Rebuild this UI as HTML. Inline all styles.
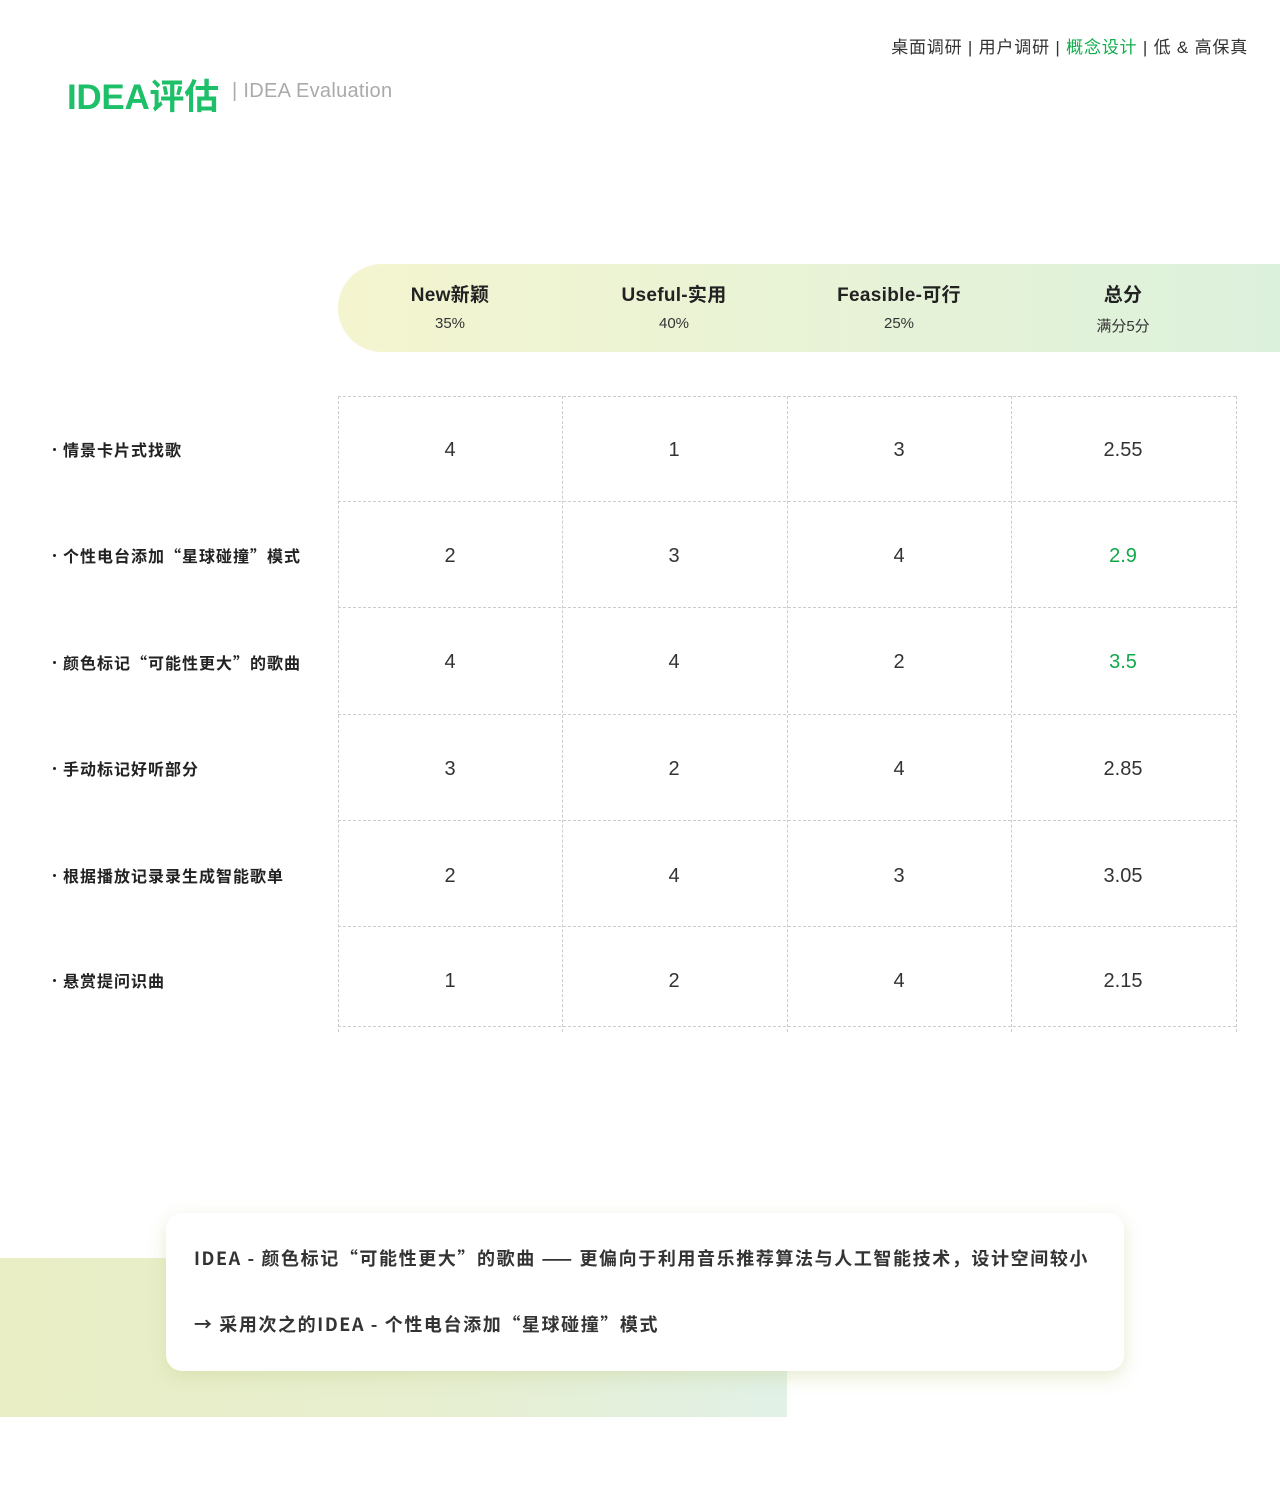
<!DOCTYPE html>
<html><head><meta charset="utf-8"><style>
*{margin:0;padding:0;box-sizing:border-box}
body{width:1280px;height:1492px;background:#fff;position:relative;overflow:hidden;font-family:"Liberation Sans","Noto Sans CJK SC",sans-serif;color:#222}
.abs{position:absolute}
.nav{right:32px;top:33px;font-size:17px;color:#333;white-space:nowrap;letter-spacing:0.8px}
.nav .g{color:#0fae4b}
.title{left:67px;top:69px;font-size:35px;font-weight:bold;color:#1dbf68;letter-spacing:-0.3px}
.sub{left:232px;top:80px;font-size:20px;color:#aaa;letter-spacing:0.3px}
.pill{left:338px;top:264px;width:942px;height:88px;border-radius:44px 0 0 44px;background:linear-gradient(90deg,#f4f5cf 0%,#ebf3d5 40%,#dcf1dc 100%)}
.hc{position:absolute;width:224px;text-align:center}
.hc b{display:block;font-size:19px;font-weight:bold;color:#222;margin-top:16px;letter-spacing:0.3px}
.hc span{display:block;font-size:15px;color:#333;margin-top:8px}
.vl{position:absolute;top:396px;height:636px;border-left:1px dashed #ccc;width:0}
.hl{position:absolute;left:338px;width:898px;border-top:1px dashed #ccc;height:0}
.lab{position:absolute;left:63px;font-size:16px;font-weight:bold;color:#222;letter-spacing:1px;font-family:"Noto Sans CJK SC",sans-serif;white-space:nowrap;line-height:24px}
.lab:before{content:"";position:absolute;left:-10px;top:11px;width:3px;height:3px;border-radius:50%;background:#222}
.num{position:absolute;width:224px;text-align:center;font-size:20px;color:#333}
.gr{color:#12a84a}
.band{left:0;top:1258px;width:787px;height:159px;background:linear-gradient(90deg,#e9eec4 0%,#e7efd2 60%,#e1f1e7 100%)}
.card{left:166px;top:1213px;width:958px;height:158px;background:#fff;border-radius:16px;box-shadow:0 6px 18px rgba(200,210,150,0.45)}
.ct{position:absolute;left:28px;font-size:18px;font-weight:bold;color:#333;white-space:nowrap;letter-spacing:1.6px;font-family:"Noto Sans CJK SC",sans-serif}
</style></head><body>
<div class="abs nav">桌面调研 | 用户调研 | <span class="g">概念设计</span> | 低 &amp; 高保真</div>
<div class="abs title">IDEA评估</div>
<div class="abs sub">| IDEA Evaluation</div>
<div class="abs pill"></div>
<div class="hc" style="left:338px;top:264px"><b>New新颖</b><span>35%</span></div>
<div class="hc" style="left:562px;top:264px"><b>Useful-实用</b><span>40%</span></div>
<div class="hc" style="left:787px;top:264px"><b>Feasible-可行</b><span>25%</span></div>
<div class="hc" style="left:1011px;top:264px"><b>总分</b><span>满分5分</span></div>

<div class="vl" style="left:338px"></div><div class="vl" style="left:562px"></div><div class="vl" style="left:787px"></div><div class="vl" style="left:1011px"></div><div class="vl" style="left:1236px"></div>
<div class="hl" style="top:396px"></div><div class="hl" style="top:501px"></div><div class="hl" style="top:607px"></div><div class="hl" style="top:714px"></div><div class="hl" style="top:820px"></div><div class="hl" style="top:926px"></div><div class="hl" style="top:1026px"></div>

<div class="lab" style="top:437px">情景卡片式找歌</div>
<div class="lab" style="top:543px">个性电台添加“星球碰撞”模式</div>
<div class="lab" style="top:650px">颜色标记“可能性更大”的歌曲</div>
<div class="lab" style="top:756px">手动标记好听部分</div>
<div class="lab" style="top:863px">根据播放记录录生成智能歌单</div>
<div class="lab" style="top:968px">悬赏提问识曲</div>

<div class="num" style="left:338px;top:439px">4</div><div class="num" style="left:562px;top:439px">1</div><div class="num" style="left:787px;top:439px">3</div><div class="num" style="left:1011px;top:439px">2.55</div>
<div class="num" style="left:338px;top:545px">2</div><div class="num" style="left:562px;top:545px">3</div><div class="num" style="left:787px;top:545px">4</div><div class="num gr" style="left:1011px;top:545px">2.9</div>
<div class="num" style="left:338px;top:651px">4</div><div class="num" style="left:562px;top:651px">4</div><div class="num" style="left:787px;top:651px">2</div><div class="num gr" style="left:1011px;top:651px">3.5</div>
<div class="num" style="left:338px;top:758px">3</div><div class="num" style="left:562px;top:758px">2</div><div class="num" style="left:787px;top:758px">4</div><div class="num" style="left:1011px;top:758px">2.85</div>
<div class="num" style="left:338px;top:865px">2</div><div class="num" style="left:562px;top:865px">4</div><div class="num" style="left:787px;top:865px">3</div><div class="num" style="left:1011px;top:865px">3.05</div>
<div class="num" style="left:338px;top:970px">1</div><div class="num" style="left:562px;top:970px">2</div><div class="num" style="left:787px;top:970px">4</div><div class="num" style="left:1011px;top:970px">2.15</div>

<div class="abs band"></div>
<div class="abs card">
<div class="ct" style="top:32px">IDEA - 颜色标记“可能性更大”的歌曲 —— 更偏向于利用音乐推荐算法与人工智能技术，设计空间较小</div>
<div class="ct" style="top:98px">→ 采用次之的IDEA - 个性电台添加“星球碰撞”模式</div>
</div>
</body></html>
